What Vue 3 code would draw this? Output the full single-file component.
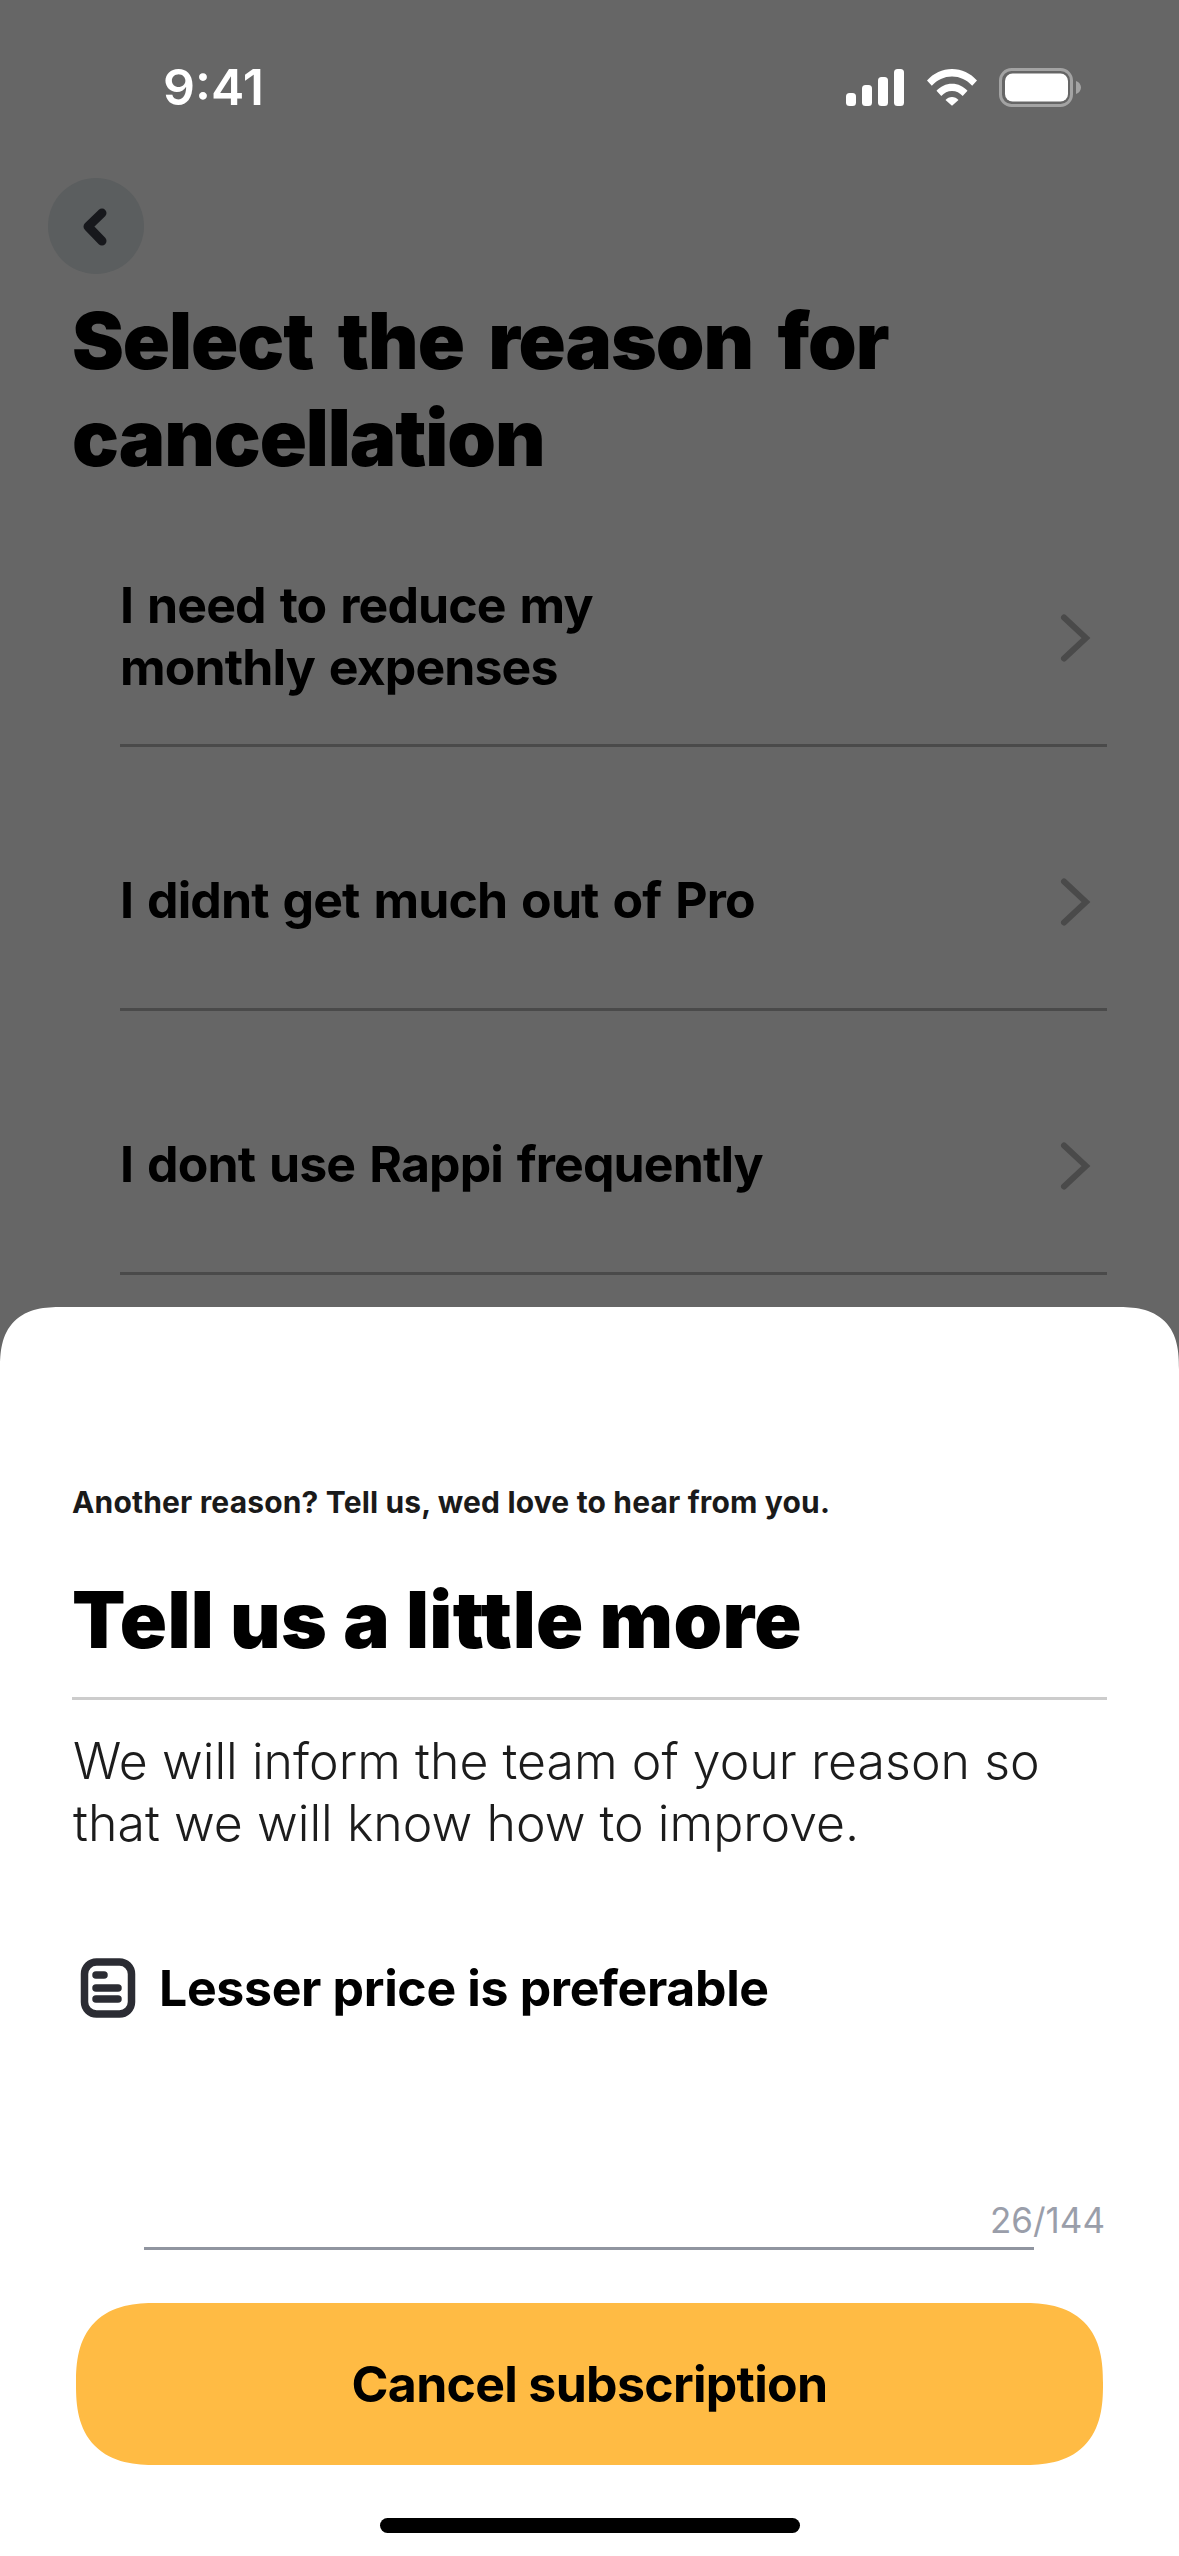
<script setup>
const reasons = [
  { id: 1, lines: ['I need to reduce my', 'monthly expenses'] },
  { id: 2, lines: ['I didnt get much out of Pro'] },
  { id: 3, lines: ['I dont use Rappi frequently'] },
]
</script>

<template>
  <div class="screen">
    <header class="status">
      <span class="time">9:41</span>
      <div class="status-icons">
        <svg class="signal" width="58" height="37" viewBox="0 0 58 37" fill="#fff">
          <rect x="0" y="24" width="10" height="13" rx="3.5" />
          <rect x="16" y="16" width="10" height="21" rx="3.5" />
          <rect x="32" y="8" width="10" height="29" rx="3.5" />
          <rect x="48" y="0" width="10" height="37" rx="3.5" />
        </svg>
        <svg class="wifi" width="50" height="37" viewBox="0 0 50 37" fill="#fff">
          <path d="M0 11.5C6.500 4.200 15.300 0 25 0s18.500 4.200 25 11.500l-4.800 5.200C39.900 10.800 32.800 7.400 25 7.400S10.100 10.800 4.800 16.700Z" />
          <path d="M9.500 21.800C13.400 17.400 18.900 14.700 25 14.700s11.600 2.700 15.500 7.100l-4.800 5.200C32.900 23.900 29.200 22 25 22s-7.900 1.900-10.700 5Z" />
          <path d="M18.500 31.400C20.200 29.500 22.500 28.400 25 28.400s4.800 1.100 6.500 3L25 37Z" transform="translate(0 -1) scale(1 1.02)" />
        </svg>
        <svg class="battery" width="82" height="39" viewBox="0 0 82 39">
          <rect x="1.500" y="1.500" width="71" height="36" rx="11" fill="none" stroke="#a3a3a3" stroke-width="3" />
          <rect x="6" y="5.500" width="63" height="28" rx="7.500" fill="#fff" />
          <path d="M77 13c3 1.200 5 3.500 5 6.500s-2 5.300-5 6.500Z" fill="#a3a3a3" />
        </svg>
      </div>
    </header>

    <button class="back" type="button" aria-label="Back">
      <svg width="24" height="38" viewBox="0 0 24 38" fill="none" stroke="#17181c" stroke-width="9" stroke-linecap="round" stroke-linejoin="round">
        <path d="M19 5 5 18.500 19 33" />
      </svg>
    </button>

    <h1 class="title">Select the reason for<br />cancellation</h1>

    <ul class="reasons">
      <li v-for="r in reasons" :key="r.id" class="reason">
        <span class="reason-text">
          <span v-for="l in r.lines" :key="l" class="reason-line">{{ l }}</span>
        </span>
        <svg class="chev" width="34" height="52" viewBox="0 0 34 52" fill="none" stroke="#4a4a4a" stroke-width="6" stroke-linecap="round" stroke-linejoin="miter">
          <path d="M7 5.500 29 26 7 46.500" />
        </svg>
      </li>
    </ul>

    <section class="sheet">
      <p class="eyebrow">Another reason? Tell us, wed love to hear from you.</p>
      <h2 class="sheet-title">Tell us a little more</h2>
      <p class="sheet-body">We will inform the team of your reason so<br />that we will know how to improve.</p>

      <div class="field">
        <svg class="note" width="56" height="60" viewBox="0 0 56 60" fill="none" stroke="#2b2c33" stroke-linecap="round">
          <rect x="4.500" y="4" width="47" height="52" rx="12" stroke-width="7.500" />
          <path d="M16 17h8M16 30h22M16 41h22" stroke-width="7.500" />
        </svg>
        <span class="field-text">Lesser price is preferable</span>
      </div>

      <div class="count-row">
        <div class="input-line"></div>
        <span class="count">26/144</span>
      </div>

      <button class="cta" type="button">Cancel subscription</button>
      <div class="home"></div>
    </section>
  </div>
</template>

<style scoped>
.screen {
  position: relative;
  width: 1179px;
  height: 2556px;
  overflow: hidden;
  background: #666666;
  font-family: Inter, "Liberation Sans", sans-serif;
  color: #000;
}
.status {
  display: flex;
  align-items: center;
  justify-content: space-between;
  height: 39px;
  padding: 68px 98px 0 163px;
}
.time {
  color: #fff;
  font-size: 50px;
  font-weight: 600;
  line-height: 39px;
}
.status-icons {
  display: flex;
  align-items: center;
  gap: 23px;
}
.battery { margin-left: -1px; }
.back {
  display: flex;
  align-items: center;
  justify-content: center;
  width: 96px;
  height: 96px;
  margin: 71px 0 0 48px;
  padding: 2px 2px 0 0;
  border: 0;
  border-radius: 50%;
  background: #5b5e5f;
}
.title {
  margin: 18px 0 0 72px;
  font-size: 78px;
  font-weight: 900;
  line-height: 97px;
  letter-spacing: -1.1px;
  word-spacing: 10px;
}
.reasons {
  list-style: none;
  margin: 0 0 0 120px;
  padding: 0;
  width: 987px;
}
.reason {
  display: flex;
  align-items: center;
  justify-content: space-between;
  height: 264px;
  padding: 48px 16px 0 0;
  box-sizing: border-box;
  border-bottom: 3px solid #4a4a4a;
}
.reason:first-child {
  height: 261px;
  padding-top: 45px;
}
.reason-text {
  display: flex;
  flex-direction: column;
  margin-bottom: 4px;
  font-size: 50px;
  font-weight: 700;
  line-height: 62px;
  letter-spacing: -0.9px;
  word-spacing: 3px;
}
.sheet {
  position: absolute;
  left: 0;
  right: 0;
  top: 1307px;
  bottom: 0;
  box-sizing: border-box;
  padding: 171px 72px 0;
  background: #fff;
  border-radius: 62px 62px 0 0;
  corner-shape: superellipse(1.4);
}
.eyebrow {
  margin: 0;
  font-size: 30px;
  font-weight: 700;
  line-height: 48px;
  letter-spacing: 0.16px;
  color: #1a1a1a;
}
.sheet-title {
  margin: 44px 0 0;
  padding-bottom: 27px;
  border-bottom: 3px solid #cccccc;
  font-size: 78px;
  font-weight: 900;
  line-height: 100px;
  letter-spacing: 0.33px;
}
.sheet-body {
  margin: 30px 0 0 1px;
  font-size: 50px;
  font-weight: 300;
  line-height: 62px;
  letter-spacing: 0.03px;
  color: #1c1c1c;
}
.field {
  display: flex;
  align-items: center;
  gap: 23px;
  margin: 103px 0 0 8px;
}
.field-text {
  font-size: 50px;
  font-weight: 700;
  line-height: 62px;
  letter-spacing: -0.35px;
}
.count-row {
  position: relative;
  height: 40px;
  margin: 191px 0 0;
}
.input-line {
  position: absolute;
  left: 72px;
  bottom: 0;
  width: 890px;
  height: 3px;
  background: #9095a0;
}
.count {
  position: absolute;
  right: 2px;
  bottom: 8px;
  font-size: 35px;
  line-height: 44px;
  font-weight: 400;
  color: #9a9eaa;
}
.cta {
  display: block;
  width: 1027px;
  height: 162px;
  margin: 53px 0 0 4px;
  border: 0;
  border-radius: 80px;
  corner-shape: superellipse(1.35);
  background: #ffbb44;
  color: #000;
  font-family: inherit;
  font-size: 50px;
  font-weight: 700;
  letter-spacing: -0.7px;
}
.home {
  width: 420px;
  height: 15px;
  margin: 53px 0 0 308px;
  border-radius: 8px;
  background: #000;
}
</style>
